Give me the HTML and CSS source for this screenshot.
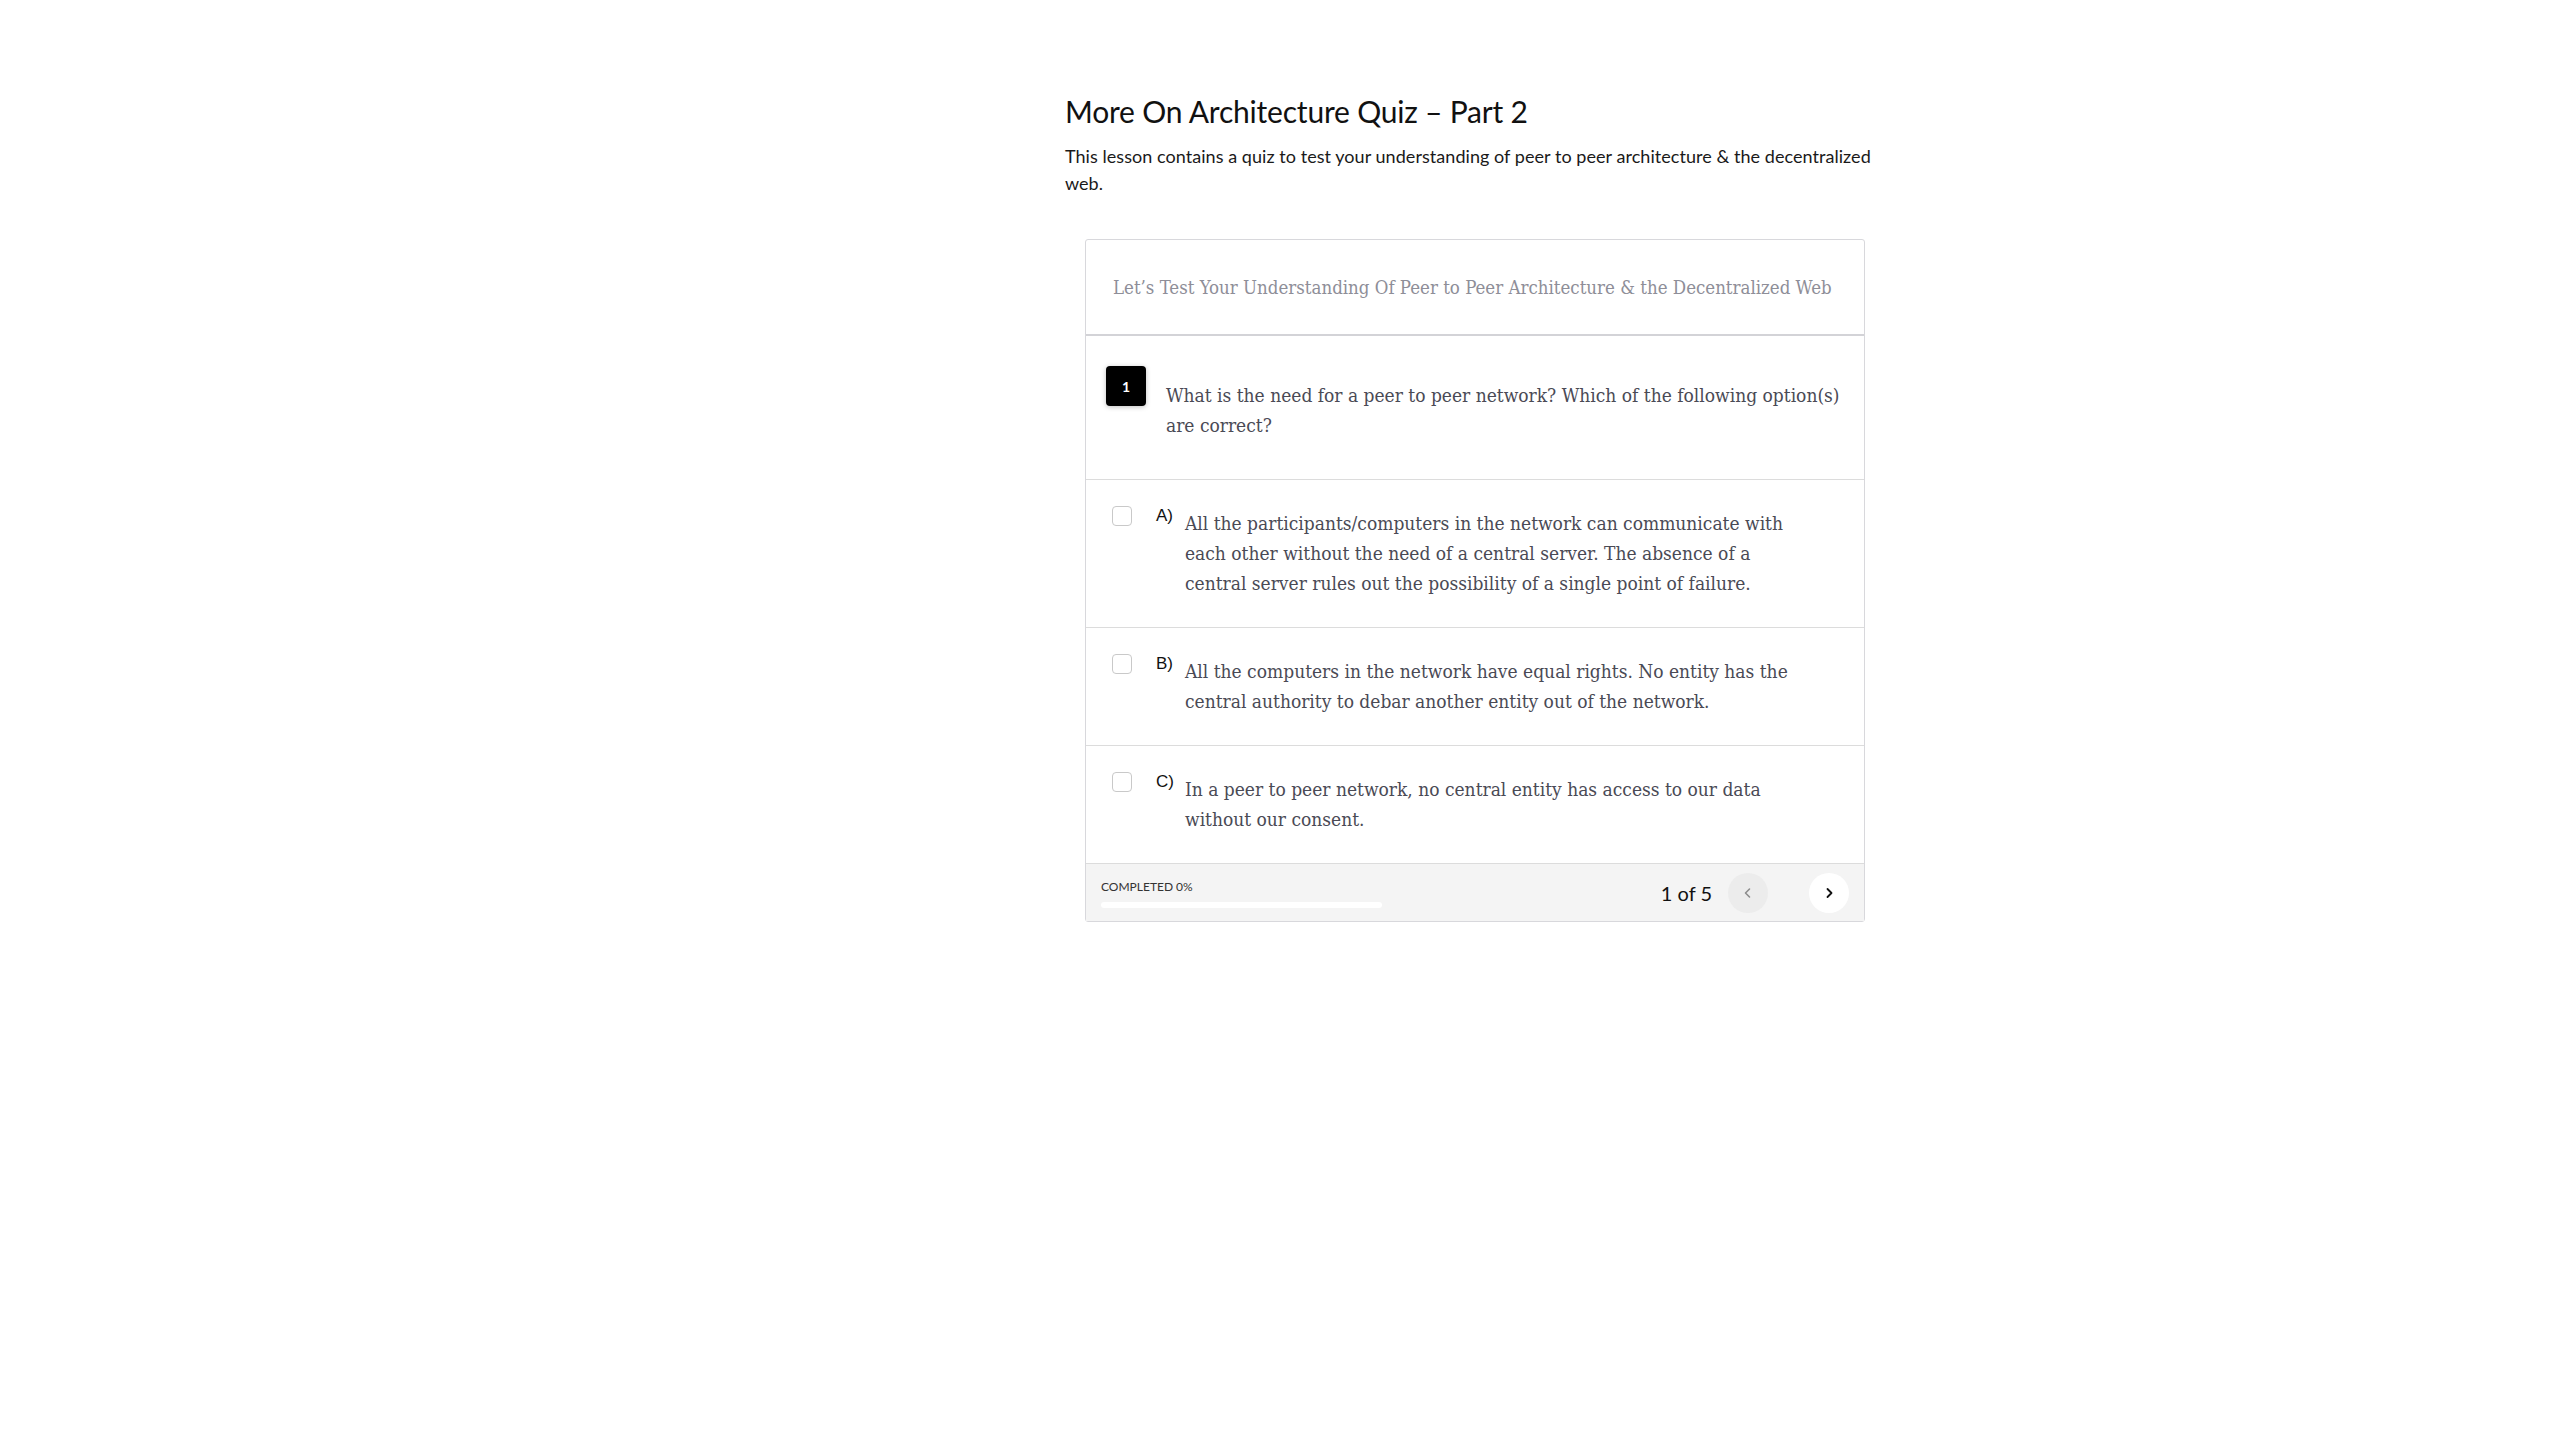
FILE: index.html
```html
<!DOCTYPE html>
<html lang="en">
<head>
<meta charset="utf-8">
<title>More On Architecture Quiz – Part 2</title>
<link rel="stylesheet" href="styles.css">
</head>
<body>
<main class="lesson">
  <h1 class="lesson-title">More On Architecture Quiz – Part 2</h1>
  <p class="lesson-desc">This lesson contains a quiz to test your understanding of peer to peer architecture &amp; the decentralized web.</p>

  <section class="quiz">
    <header class="quiz-head">Let’s Test Your Understanding Of Peer to Peer Architecture &amp; the Decentralized Web</header>

    <div class="question">
      <span class="q-num">1</span>
      <p class="q-text">What is the need for a peer to peer network? Which of the following option(s) are correct?</p>
    </div>

    <div class="option">
      <span class="check"></span>
      <span class="opt-label">A)</span>
      <p class="opt-text">All the participants/computers in the network can communicate with each other without the need of a central server. The absence of a central server rules out the possibility of a single point of failure.</p>
    </div>
    <div class="option">
      <span class="check"></span>
      <span class="opt-label">B)</span>
      <p class="opt-text">All the computers in the network have equal rights. No entity has the central authority to debar another entity out of the network.</p>
    </div>
    <div class="option">
      <span class="check"></span>
      <span class="opt-label">C)</span>
      <p class="opt-text">In a peer to peer network, no central entity has access to our data without our consent.</p>
    </div>

    <footer class="quiz-foot">
      <div class="progress">
        <span class="progress-label">COMPLETED 0%</span>
        <span class="progress-bar"></span>
      </div>
      <div class="pager">
        <span class="pager-count">1 of 5</span>
        <button class="nav-btn prev" aria-label="Previous">
          <svg width="14" height="14" viewBox="0 0 14 14"><polyline points="8.5,3 4.5,7 8.5,11" fill="none" stroke="#8c8c8c" stroke-width="1.6" stroke-linecap="round" stroke-linejoin="round"/></svg>
        </button>
        <button class="nav-btn next" aria-label="Next">
          <svg width="14" height="14" viewBox="0 0 14 14"><polyline points="5.5,3 9.5,7 5.5,11" fill="none" stroke="#111" stroke-width="1.8" stroke-linecap="round" stroke-linejoin="round"/></svg>
        </button>
      </div>
    </footer>
  </section>
</main>
</body>
</html>
```

FILE: styles.css
```css
* { box-sizing: border-box; }

body {
  margin: 0;
  background: #ffffff;
  font-family: "Lato", "Noto Sans", sans-serif;
  color: #111;
}

.lesson {
  width: 820px;
  margin-left: 1065px;
  padding-top: 90px;
}

.lesson-title {
  margin: 0;
  font-size: 30px;
  font-weight: 400;
  line-height: 42px;
  color: #111;
  letter-spacing: -0.2px;
}

.lesson-desc {
  margin: 11px 0 0;
  font-size: 18px;
  letter-spacing: 0.05px;
  line-height: 27px;
  color: #1a1a1a;
}

.quiz {
  margin: 42px 20px 0;
  border: 1px solid #d8d8dc;
  border-radius: 3px;
  background: #fff;
}

.quiz-head {
  height: 96px;
  display: flex;
  align-items: center;
  padding: 0 27px;
  border-bottom: 2px solid #d3d3d7;
  font-family: "DejaVu Serif", "Liberation Serif", serif;
  font-stretch: condensed;
  font-size: 18.5px;
  color: #8e8e98;
}

.question {
  display: flex;
  align-items: flex-start;
  padding: 30px 20px 39px 20px;
  border-bottom: 1px solid #dcdcdc;
}

.q-num {
  flex: none;
  width: 40px;
  height: 40px;
  border-radius: 4px;
  background: #000;
  color: #fff;
  display: flex;
  align-items: center;
  justify-content: center;
  font-family: "Lato", sans-serif;
  font-weight: 700;
  font-size: 14px;
  box-shadow: 0 1px 5px rgba(0,0,0,0.25);
}

.q-text {
  margin: 14px 0 0 20px;
  font-family: "DejaVu Serif", "Liberation Serif", serif;
  font-stretch: condensed;
  font-size: 19px;
  line-height: 30px;
  color: #4a4a55;
}

.option {
  display: flex;
  align-items: flex-start;
  padding: 26px 70px 29px 26px;
  border-bottom: 1px solid #dcdcdc;
}

.check {
  flex: none;
  width: 20px;
  height: 20px;
  border: 1.5px solid #c9c9c9;
  border-radius: 4px;
  background: #fff;
}

.opt-label {
  flex: none;
  width: 29px;
  margin-left: 24px;
  font-family: "Liberation Sans", sans-serif;
  font-size: 17px;
  line-height: 20px;
  color: #111;
}

.opt-text {
  margin: 2px 0 0;
  font-family: "DejaVu Serif", "Liberation Serif", serif;
  font-stretch: condensed;
  font-size: 19px;
  line-height: 30px;
  color: #4a4a55;
}

.quiz-foot {
  height: 57px;
  display: flex;
  align-items: center;
  justify-content: space-between;
  padding: 0 15px 0 15px;
  background: #f4f4f4;
}

.progress {
  display: flex;
  flex-direction: column;
  gap: 8px;
  padding-top: 2px;
}

.progress-label {
  font-size: 12px;
  line-height: 14px;
  color: #333;
}

.progress-bar {
  width: 281px;
  height: 6px;
  border-radius: 3px;
  background: #fff;
}

.pager {
  display: flex;
  align-items: center;
}

.pager-count {
  font-size: 20px;
  color: #111;
  margin-right: 16px;
}

.nav-btn {
  width: 40px;
  height: 40px;
  border: 0;
  border-radius: 50%;
  padding: 0;
  display: flex;
  align-items: center;
  justify-content: center;
  cursor: pointer;
}

.nav-btn.prev {
  background: #ececec;
  margin-right: 41px;
}

.nav-btn.next {
  background: #fff;
}
```
